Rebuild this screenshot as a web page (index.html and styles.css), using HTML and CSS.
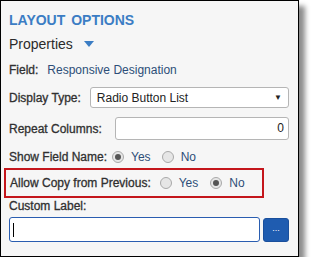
FILE: index.html
```html
<!DOCTYPE html>
<html>
  <head>
    <title>Layout options</title>
    <link rel="stylesheet" href="styles.css">
  </head>
  <body>
    <div class="panel">
      <div class="panel-title">LAYOUT OPTIONS</div>
      <div class="section-head">
        Properties <span class="caret-down"></span>
      </div>
      <div class="row row-field">
        <span class="label">Field:</span>
        <span class="field-value">Responsive Designation</span>
      </div>
      <div class="row row-display">
        <span class="label">Display Type:</span>
        <div class="select">
          <span>Radio Button List</span>
          <span class="select-arrow">&#9660;</span>
        </div>
      </div>
      <div class="row row-repeat">
        <span class="label">Repeat Columns:</span>
        <div class="text-box number">0</div>
      </div>
      <div class="row row-show">
        <span class="label">Show Field Name:</span>
        <span class="radio checked"></span><span class="radio-text">Yes</span>
        <span class="radio"></span><span class="radio-text">No</span>
      </div>
      <div class="row row-copy">
        <span class="label">Allow Copy from Previous:</span>
        <span class="radio"></span><span class="radio-text">Yes</span>
        <span class="radio checked"></span><span class="radio-text">No</span>
      </div>
      <div class="custom-label">Custom Label:</div>
      <div class="row row-custom">
        <div class="text-box focused"><span class="text-cursor"></span></div>
        <button class="btn-more">...</button>
      </div>
    </div>
  </body>
</html>
```

FILE: styles.css
```css
body {
  font-family: "Liberation Sans", Arial, sans-serif;
  margin: 0;
  background-color: #ffffff;
  color: #333;
  font-size: 12px;
}
.panel {
  width: 280px;
  height: 247px;
  padding: 8px 9px 0 8px;
  background-color: #f6f6f6;
  border: 1px solid #000;
  box-shadow: 6px 6px 5px rgba(0, 0, 0, 0.45);
}
.panel-title {
  color: #3b7dc4;
  font-size: 14px;
  font-weight: bold;
  line-height: 22px;
  word-spacing: 2px;
}
.section-head {
  margin-top: 2px;
  font-size: 14px;
  line-height: 22px;
  color: #2b2b2b;
}
.caret-down {
  display: inline-block;
  margin-left: 7px;
  width: 0;
  height: 0;
  border-left: 5px solid transparent;
  border-right: 5px solid transparent;
  border-top: 6px solid #3b7dc4;
  vertical-align: 2px;
}
.row {
  display: flex;
  align-items: center;
}
.label {
  flex-shrink: 0;
  white-space: nowrap;
  color: #303030;
  -webkit-text-stroke: 0.3px #303030;
}
.row-field {
  margin-top: 5px;
  height: 20px;
}
.field-value {
  margin-left: 9px;
  color: #2d4e78;
}
.row-display {
  margin-top: 7px;
}
.select {
  flex: 1;
  height: 19px;
  margin-left: 9px;
  padding: 0 6px;
  display: flex;
  align-items: center;
  justify-content: space-between;
  background-color: #fff;
  border: 1px solid #b5b5b5;
  border-radius: 3px;
  color: #222;
}
.select-arrow {
  font-size: 8px;
}
.row-repeat {
  margin-top: 9px;
}
.text-box {
  flex: 1;
  height: 21px;
  background-color: #fff;
  border: 1px solid #b5b5b5;
  border-radius: 3px;
}
.number {
  margin-left: 13px;
  padding-right: 4px;
  text-align: right;
  line-height: 21px;
  color: #222;
}
.row-show {
  margin-top: 7px;
  height: 20px;
}
.radio {
  flex-shrink: 0;
  display: inline-block;
  box-sizing: border-box;
  width: 12px;
  height: 12px;
  border: 1px solid #a9a9a9;
  border-radius: 50%;
  background-color: #e6e6e6;
  position: relative;
}
.radio.checked::after {
  content: "";
  position: absolute;
  left: 2px;
  top: 2px;
  width: 6px;
  height: 6px;
  border-radius: 50%;
  background-color: #555;
}
.radio-text {
  margin-left: 7px;
  margin-right: 11px;
  color: #2d4e78;
}
.row-show .label {
  margin-right: 5px;
}
.row-copy {
  box-sizing: border-box;
  margin-top: 1px;
  margin-left: -5px;
  width: 260px;
  height: 30px;
  padding-left: 4px;
  border: 2px solid #c4161c;
}
.row-copy .label {
  margin-right: 9px;
}
.row-copy .radio-text {
  margin-right: 12px;
}
.custom-label {
  color: #303030;
  -webkit-text-stroke: 0.3px #303030;
  line-height: 16px;
}
.row-custom {
  margin-top: 3px;
}
.focused {
  height: 23px;
  border-color: #2a5db0;
  display: flex;
  align-items: center;
  padding-left: 3px;
}
.text-cursor {
  width: 1px;
  height: 14px;
  background-color: #000;
}
.btn-more {
  width: 26px;
  height: 24px;
  margin-left: 3px;
  padding: 0 0 4px;
  border: 1px solid #1a4f9c;
  border-radius: 3px;
  background-color: #1f5cb0;
  color: #fff;
  font-family: "Liberation Sans", Arial, sans-serif;
  font-size: 9px;
}
```
